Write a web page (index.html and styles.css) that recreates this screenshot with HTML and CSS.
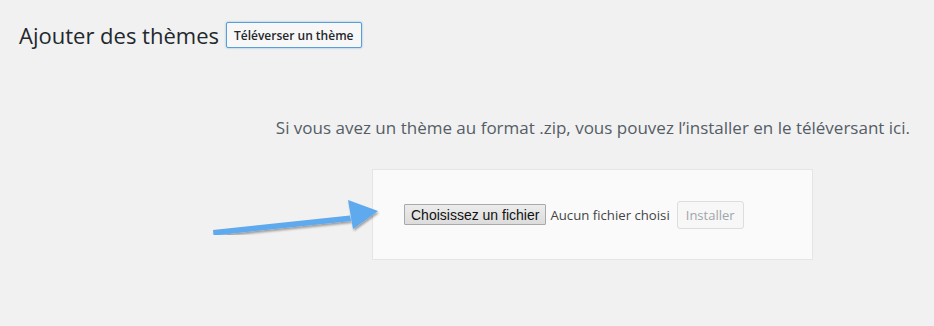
FILE: index.html
```html
<!DOCTYPE html>
<html lang="fr">
<head>
<meta charset="utf-8">
<title>Ajouter des thèmes</title>
<link rel="stylesheet" href="styles.css">
</head>
<body>
<div class="wrap">
  <div class="header">
    <h1 class="title">Ajouter des thèmes</h1>
    <button class="upload-btn" type="button">Téléverser un thème</button>
  </div>
  <p class="install-help">Si vous avez un thème au format .zip, vous pouvez l’installer en le téléversant ici.</p>
  <div class="upload-row">
    <div class="upload-form">
      <button class="file-btn" type="button">Choisissez un fichier</button>
      <span class="file-name">Aucun fichier choisi</span>
      <button class="install-btn" type="button" disabled>Installer</button>
    </div>
  </div>
  <svg class="arrow" width="180" height="45" viewBox="0 0 180 45" aria-hidden="true">
    <defs>
      <filter id="sh" x="-10%" y="-30%" width="120%" height="160%">
        <feDropShadow dx="1" dy="2" stdDeviation="1.2" flood-color="#000" flood-opacity="0.35"/>
      </filter>
    </defs>
    <g filter="url(#sh)" fill="#5ea9ee">
      <polygon points="13,40 150,25.5 151,31 13.6,45.5"/>
      <polygon points="148,10 178,21 153,39"/>
    </g>
  </svg>
</div>
</body>
</html>
```
FILE: styles.css
```css
html, body {
  margin: 0;
  padding: 0;
  background: #f1f1f1;
}
body {
  font-family: "Open Sans", "Noto Sans", sans-serif;
  color: #23282d;
  width: 934px;
  height: 326px;
  overflow: hidden;
}
.wrap {
  position: relative;
  padding: 22px 24px 0 19px;
}
.header {
  display: flex;
  align-items: center;
  gap: 7px;
}
.title {
  margin: 0;
  font-weight: 400;
  font-size: 22px;
  line-height: 26px;
  color: #23282d;
}
.upload-btn {
  font-family: "Open Sans", sans-serif;
  font-size: 12px;
  font-weight: 600;
  color: #23282d;
  background: #f7f7f7;
  border: 1px solid #5b9dd9;
  box-shadow: 0 0 2px rgba(30, 140, 190, 0.6);
  border-radius: 2px;
  height: 26px;
  padding: 0 7px;
}
.install-help {
  margin: 68px 0 0;
  text-align: right;
  font-size: 17px;
  line-height: 24px;
  color: #555d66;
}
.upload-row {
  display: flex;
  justify-content: flex-start;
  margin: 29px 0 0 353px;
}
.upload-form {
  width: 441px;
  height: 91px;
  box-sizing: border-box;
  background: #fafafa;
  border: 1px solid #e5e5e5;
  display: flex;
  align-items: center;
  padding: 0 0 0 31px;
  gap: 4px;
}
.file-btn {
  font-family: "Liberation Sans", Arial, sans-serif;
  font-size: 14px;
  color: #111;
  height: 21px;
  padding: 0 6px;
  border: 1px solid #a9a9a9;
  background: linear-gradient(#ececec, #dcdcdc);
  border-radius: 1px;
}
.file-name {
  font-size: 13.2px;
  color: #444;
}
.install-btn {
  margin-left: 3px;
  font-family: "Open Sans", sans-serif;
  font-size: 13px;
  color: #a0a5aa;
  background: #f7f7f7;
  border: 1px solid #ddd;
  border-radius: 3px;
  height: 28px;
  padding: 0 8px;
}
.arrow {
  position: absolute;
  left: 200px;
  top: 190px;
}
```
